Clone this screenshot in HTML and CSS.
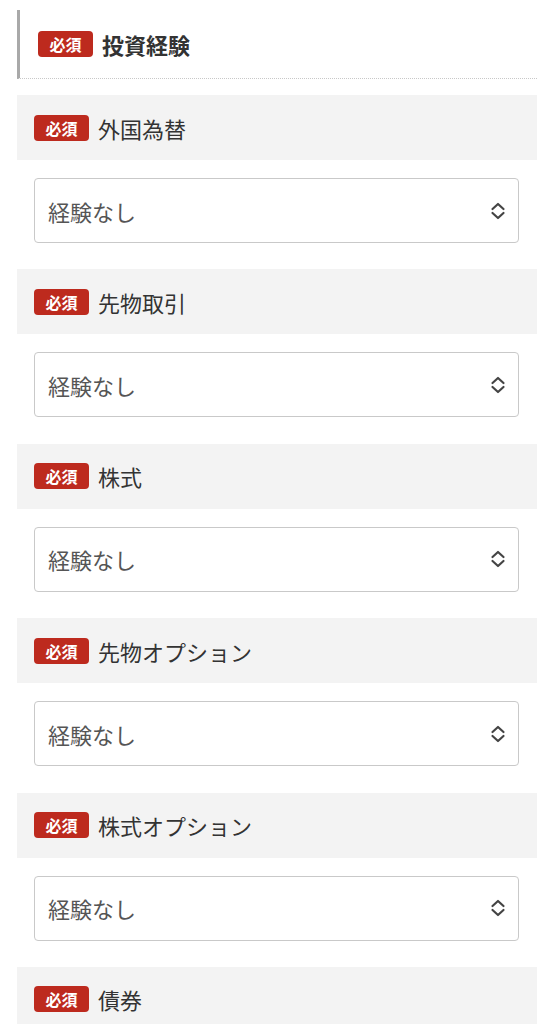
FILE: index.html
```html
<!DOCTYPE html>
<html lang="ja">
<head>
<meta charset="utf-8">
<link rel="stylesheet" href="styles.css">
</head>
<body>
<div class="page">
  <div class="section-head">
    <span class="badge badge-lg">必須</span>
    <h2 class="section-title">投資経験</h2>
  </div>

  <div class="field">
    <div class="field-label"><span class="badge">必須</span><span class="label-text">外国為替</span></div>
    <div class="field-body">
      <div class="select"><span class="select-value">経験なし</span>
        <svg class="chev" width="16" height="20" viewBox="0 0 16 20"><path d="M2.5 8 L8 3 L13.5 8 M2.5 12 L8 17 L13.5 12" fill="none" stroke="#444" stroke-width="2.2" stroke-linecap="round" stroke-linejoin="round"/></svg>
      </div>
    </div>
  </div>

  <div class="field">
    <div class="field-label"><span class="badge">必須</span><span class="label-text">先物取引</span></div>
    <div class="field-body">
      <div class="select"><span class="select-value">経験なし</span>
        <svg class="chev" width="16" height="20" viewBox="0 0 16 20"><path d="M2.5 8 L8 3 L13.5 8 M2.5 12 L8 17 L13.5 12" fill="none" stroke="#444" stroke-width="2.2" stroke-linecap="round" stroke-linejoin="round"/></svg>
      </div>
    </div>
  </div>

  <div class="field">
    <div class="field-label"><span class="badge">必須</span><span class="label-text">株式</span></div>
    <div class="field-body">
      <div class="select"><span class="select-value">経験なし</span>
        <svg class="chev" width="16" height="20" viewBox="0 0 16 20"><path d="M2.5 8 L8 3 L13.5 8 M2.5 12 L8 17 L13.5 12" fill="none" stroke="#444" stroke-width="2.2" stroke-linecap="round" stroke-linejoin="round"/></svg>
      </div>
    </div>
  </div>

  <div class="field">
    <div class="field-label"><span class="badge">必須</span><span class="label-text">先物オプション</span></div>
    <div class="field-body">
      <div class="select"><span class="select-value">経験なし</span>
        <svg class="chev" width="16" height="20" viewBox="0 0 16 20"><path d="M2.5 8 L8 3 L13.5 8 M2.5 12 L8 17 L13.5 12" fill="none" stroke="#444" stroke-width="2.2" stroke-linecap="round" stroke-linejoin="round"/></svg>
      </div>
    </div>
  </div>

  <div class="field">
    <div class="field-label"><span class="badge">必須</span><span class="label-text">株式オプション</span></div>
    <div class="field-body">
      <div class="select"><span class="select-value">経験なし</span>
        <svg class="chev" width="16" height="20" viewBox="0 0 16 20"><path d="M2.5 8 L8 3 L13.5 8 M2.5 12 L8 17 L13.5 12" fill="none" stroke="#444" stroke-width="2.2" stroke-linecap="round" stroke-linejoin="round"/></svg>
      </div>
    </div>
  </div>

  <div class="field">
    <div class="field-label"><span class="badge">必須</span><span class="label-text">債券</span></div>
    <div class="field-body">
      <div class="select"><span class="select-value">経験なし</span>
        <svg class="chev" width="16" height="20" viewBox="0 0 16 20"><path d="M2.5 8 L8 3 L13.5 8 M2.5 12 L8 17 L13.5 12" fill="none" stroke="#444" stroke-width="2.2" stroke-linecap="round" stroke-linejoin="round"/></svg>
      </div>
    </div>
  </div>
</div>
</body>
</html>
```

FILE: styles.css
```css
* { box-sizing: border-box; }
html, body { margin: 0; padding: 0; background: #fff; }
body {
  font-family: "Noto Sans CJK JP", "Noto Sans", sans-serif;
  color: #333;
}
.page {
  padding: 10px 21px 0 17px;
}
.section-head {
  display: flex;
  align-items: center;
  gap: 9px;
  height: 69px;
  padding-left: 18px;
  border-left: 3px solid #a9a9a9;
  border-bottom: 1px dotted #c8c8c8;
  margin-bottom: 16px;
}
.section-title {
  margin: 0;
  font-size: 22px;
  font-weight: 700;
  color: #333;
  line-height: 1;
}
.badge {
  display: inline-flex;
  align-items: center;
  justify-content: center;
  width: 55px;
  height: 26px;
  border-radius: 4px;
  background: #bd2a1e;
  color: #fff;
  font-size: 16px;
  font-weight: 700;
  line-height: 1;
  flex: none;
}
.badge-lg { width: 55px; height: 26px; }
.field { margin-bottom: 26.4px; }
.field-label {
  display: flex;
  align-items: center;
  gap: 9px;
  height: 65px;
  padding-left: 17px;
  background: #f3f3f3;
}
.label-text {
  font-size: 22px;
  color: #333;
  line-height: 1;
}
.field-body {
  padding: 18px 18px 0 17px;
}
.select {
  display: flex;
  align-items: center;
  justify-content: space-between;
  height: 65px;
  padding: 0 12px 0 13px;
  border: 1px solid #c9c9c9;
  border-radius: 4px;
  background: #fff;
}
.select-value {
  font-size: 22px;
  color: #555;
  line-height: 1;
}
.chev { display: block; }
```
